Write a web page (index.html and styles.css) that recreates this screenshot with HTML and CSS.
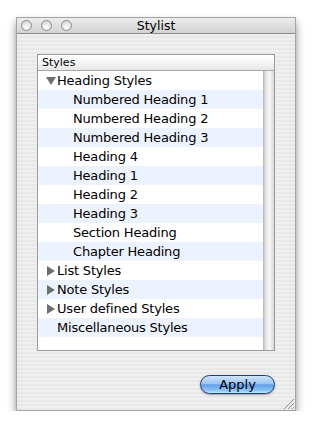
FILE: index.html
```html
<!DOCTYPE html>
<html lang="en">
<head>
  <meta charset="UTF-8">
  <title>Stylist</title>
  <link rel="stylesheet" href="styles.css">
</head>
<body>
  <div class="window">
    <div class="titlebar">
      <div class="lights">
        <span class="light"></span>
        <span class="light"></span>
        <span class="light"></span>
      </div>
      <div class="title">Stylist</div>
      <div></div>
    </div>

    <div class="content">
      <div class="table">
        <div class="table-header">Styles</div>
        <div class="table-body">
          <div class="rows">
            <div class="row group">
              <svg class="tri" width="10" height="10" viewBox="0 0 10 10"><polygon points="0,1 10,1 5,9" /></svg>
              Heading Styles
            </div>
            <div class="row child">Numbered Heading 1</div>
            <div class="row child">Numbered Heading 2</div>
            <div class="row child">Numbered Heading 3</div>
            <div class="row child">Heading 4</div>
            <div class="row child">Heading 1</div>
            <div class="row child">Heading 2</div>
            <div class="row child">Heading 3</div>
            <div class="row child">Section Heading</div>
            <div class="row child">Chapter Heading</div>
            <div class="row group">
              <svg class="tri" width="10" height="10" viewBox="0 0 10 10"><polygon points="1,0 9,5 1,10" /></svg>
              List Styles
            </div>
            <div class="row group">
              <svg class="tri" width="10" height="10" viewBox="0 0 10 10"><polygon points="1,0 9,5 1,10" /></svg>
              Note Styles
            </div>
            <div class="row group">
              <svg class="tri" width="10" height="10" viewBox="0 0 10 10"><polygon points="1,0 9,5 1,10" /></svg>
              User defined Styles
            </div>
            <div class="row group plain">Miscellaneous Styles</div>
          </div>
          <div class="scrollbar"></div>
        </div>
      </div>

      <div class="actions">
        <button class="apply">Apply</button>
      </div>
    </div>

    <svg class="grip" width="11" height="11" viewBox="0 0 11 11">
      <line x1="1" y1="11" x2="11" y2="1" />
      <line x1="5" y1="11" x2="11" y2="5" />
      <line x1="9" y1="11" x2="11" y2="9" />
    </svg>
  </div>
</body>
</html>
```

FILE: styles.css
```css
* {
  margin: 0;
  padding: 0;
  box-sizing: border-box;
}

body {
  background: #ffffff;
  font-family: "DejaVu Sans", "Liberation Sans", sans-serif;
  color: #000;
}

.window {
  position: relative;
  width: 280px;
  height: 394px;
  margin: 17px 0 0 16px;
  border: 1px solid #a4a4a4;
  background: repeating-linear-gradient(#efefef 0 2px, #e8e8e8 2px 4px);
  box-shadow: 0 5px 8px rgba(0, 0, 0, 0.45);
}

.titlebar {
  height: 16px;
  display: grid;
  grid-template-columns: 1fr auto 1fr;
  align-items: center;
  background: linear-gradient(#ededed, #d2d2d2);
  border-bottom: 1px solid #8c8c8c;
}

.lights {
  display: flex;
  gap: 9px;
  padding-left: 4px;
}

.light {
  width: 11px;
  height: 11px;
  border-radius: 50%;
  border: 1px solid #8a8a8a;
  background: radial-gradient(circle at 50% 70%, #ffffff, #e2e2e2 60%, #c8c8c8);
}

.title {
  font-size: 12.5px;
  line-height: 15px;
}

.content {
  padding: 20px 20px 0 20px;
}

.table {
  width: 238px;
  border: 1px solid #9c9c9c;
  background: #fff;
}

.table-header {
  height: 16px;
  line-height: 15px;
  font-size: 11px;
  padding-left: 4px;
  background: linear-gradient(#ffffff, #f2f2f2 60%, #e6e6e6);
  border-bottom: 1px solid #a8a8a8;
}

.table-body {
  height: 279px;
  display: flex;
}

.rows {
  flex: 1;
}

.row {
  height: 19px;
  line-height: 19px;
  font-size: 13px;
  letter-spacing: -0.2px;
  white-space: nowrap;
  display: flex;
  align-items: center;
}

.row:nth-child(even) {
  background: #edf3fe;
}

.group {
  padding-left: 8px;
}

.plain {
  padding-left: 19px;
}

.child {
  padding-left: 35px;
}

.tri {
  fill: #6f6f6f;
  margin-right: 1px;
}

.scrollbar {
  width: 11px;
  background: linear-gradient(to right, #c9c9c9, #e9e9e9 25%, #f8f8f8 55%, #e4e4e4 85%, #d2d2d2);
  border-left: 1px solid #bdbdbd;
}

.actions {
  display: flex;
  justify-content: flex-end;
  margin-top: 24px;
}

.apply {
  width: 75px;
  height: 19px;
  border-radius: 10px;
  border: 1px solid #1f3f78;
  font-family: "DejaVu Sans", sans-serif;
  font-size: 13px;
  line-height: 16px;
  color: #000;
  background: linear-gradient(#cfe5fc 0%, #9cc7f3 45%, #5f9fe6 52%, #8cc4f6 85%, #c4ecff 100%);
  box-shadow: 0 1px 2px rgba(0, 0, 0, 0.35);
}

.grip {
  position: absolute;
  right: 1px;
  bottom: 1px;
  stroke: #8e8e8e;
  stroke-width: 1;
}
```
